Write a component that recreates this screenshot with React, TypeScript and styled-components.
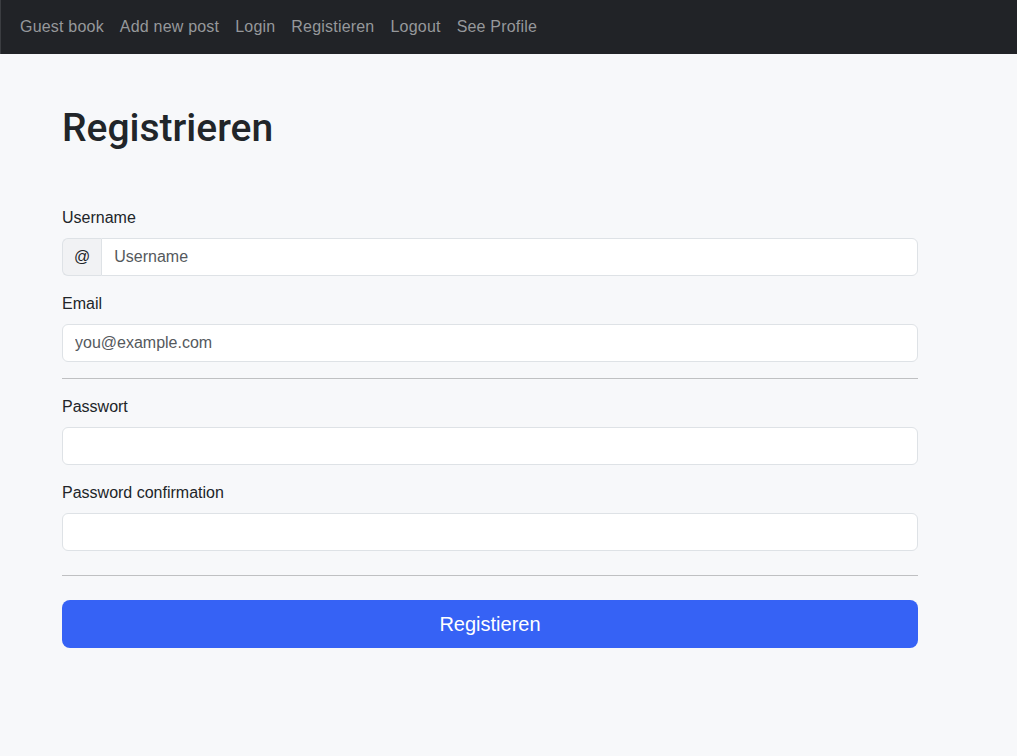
import React from "react";
import styled, { createGlobalStyle } from "styled-components";

const Global = createGlobalStyle`
  html, body { margin: 0; padding: 0; }
  body {
    background: #f7f8fa;
    font-family: "Liberation Sans", Arial, sans-serif;
    color: #212529;
    font-size: 16px;
    line-height: 1.5;
  }
  * { box-sizing: border-box; }
`;

const Navbar = styled.nav`
  height: 54px;
  background: #212327;
  border-left: 1px solid #3b3d41;
  display: flex;
  align-items: center;
  padding: 0 11px 1px;
`;

const NavLink = styled.a`
  color: #96989b;
  text-decoration: none;
  font-size: 16px;
  letter-spacing: 0.2px;
  padding: 0 8px;
  line-height: 24px;
`;

const Main = styled.main`
  padding: 50px 99px 0 62px;
`;

const Title = styled.h1`
  margin: 0 0 54px;
  font-family: Roboto, "Liberation Sans", sans-serif;
  font-weight: 500;
  font-size: 39px;
  line-height: 48px;
  color: #212529;
`;

const Form = styled.form`
  display: flex;
  flex-direction: column;
`;

const Field = styled.div`
  display: flex;
  flex-direction: column;
  margin-bottom: 16px;
`;

const Label = styled.label`
  font-size: 16px;
  line-height: 24px;
  margin-bottom: 8px;
  color: #212529;
`;

const InputGroup = styled.div`
  display: flex;
  height: 38px;
`;

const Addon = styled.span`
  display: flex;
  align-items: center;
  padding: 0 11px;
  background: #f1f2f4;
  border: 1px solid #dee2e6;
  border-right: none;
  border-radius: 6px 0 0 6px;
  font-size: 16px;
  color: #212529;
`;

const Input = styled.input<{ $grouped?: boolean }>`
  display: block;
  width: 100%;
  min-width: 0;
  height: 38px;
  flex: 1 1 auto;
  padding: 6px 12px;
  font-family: "Liberation Sans", Arial, sans-serif;
  font-size: 16px;
  color: #212529;
  background: #fff;
  border: 1px solid #dee2e6;
  border-radius: ${(p) => (p.$grouped ? "0 6px 6px 0" : "6px")};
  outline: none;
  &::placeholder { color: #55595d; }
`;

const Rule = styled.hr<{ $wide?: boolean }>`
  border: none;
  border-top: 1px solid #bfc0c2;
  margin: ${(p) => (p.$wide ? "8px 0 24px" : "0 0 16px")};
`;

const Button = styled.button`
  height: 48px;
  width: 100%;
  background: #3662f5;
  color: #fff;
  border: none;
  border-radius: 8px;
  font-family: "Liberation Sans", Arial, sans-serif;
  font-size: 20px;
  cursor: pointer;
`;

export default function App() {
  return (
    <>
      <Global />
      <Navbar>
        <NavLink href="#">Guest book</NavLink>
        <NavLink href="#">Add new post</NavLink>
        <NavLink href="#">Login</NavLink>
        <NavLink href="#">Registieren</NavLink>
        <NavLink href="#">Logout</NavLink>
        <NavLink href="#">See Profile</NavLink>
      </Navbar>
      <Main>
        <Title>Registrieren</Title>
        <Form onSubmit={(e) => e.preventDefault()}>
          <Field>
            <Label>Username</Label>
            <InputGroup>
              <Addon>@</Addon>
              <Input $grouped placeholder="Username" />
            </InputGroup>
          </Field>
          <Field>
            <Label>Email</Label>
            <Input placeholder="you@example.com" />
          </Field>
          <Rule />
          <Field>
            <Label>Passwort</Label>
            <Input type="password" />
          </Field>
          <Field>
            <Label>Password confirmation</Label>
            <Input type="password" />
          </Field>
          <Rule $wide />
          <Button type="submit">Registieren</Button>
        </Form>
      </Main>
    </>
  );
}
